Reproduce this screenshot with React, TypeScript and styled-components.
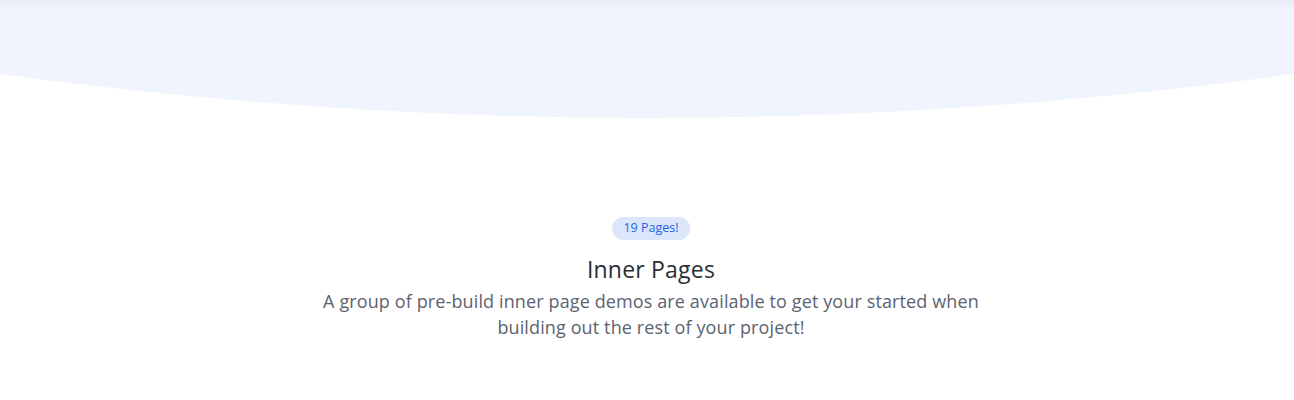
import React from "react";
import styled, { createGlobalStyle } from "styled-components";

const Global = createGlobalStyle`
  html, body { margin: 0; padding: 0; background: #ffffff; }
  body { font-family: "Open Sans", "Lato", sans-serif; }
`;

const Page = styled.div`
  width: 1294px;
  height: 400px;
  position: relative;
  overflow: hidden;
  background: #ffffff;
`;

const Wave = styled.svg`
  position: absolute;
  top: 0;
  left: 0;
  display: block;
`;

const Content = styled.section`
  position: relative;
  display: flex;
  flex-direction: column;
  align-items: center;
  padding: 217px 0 0 8px;
  text-align: center;
`;

const Badge = styled.span`
  display: inline-flex;
  align-items: center;
  justify-content: center;
  height: 23px;
  padding: 0 11px;
  border-radius: 12px;
  background: #dbe6fb;
  color: #1d64ea;
  font-size: 12.5px;
  line-height: 1;
`;

const Title = styled.h2`
  margin: 14px 0 0;
  font-size: 23px;
  font-weight: 400;
  letter-spacing: 0.2px;
  line-height: 30px;
  color: #2a2e35;
`;

const Lead = styled.p`
  margin: 4px 0 0;
  width: 690px;
  font-size: 18px;
  letter-spacing: 0.12px;
  line-height: 26px;
  color: #5c6370;
`;

export default function App() {
  return (
    <Page>
      <Global />
      <Wave width="1294" height="130" viewBox="0 0 1294 130">
        <defs>
          <linearGradient id="topShade" x1="0" y1="0" x2="0" y2="1">
            <stop offset="0" stopColor="#e6eaf3" />
            <stop offset="1" stopColor="#f0f4fd" />
          </linearGradient>
        </defs>
        <path d="M0 0 H1294 V74 Q647 162 0 74 Z" fill="#f0f4fd" />
        <rect x="0" y="0" width="1294" height="10" fill="url(#topShade)" opacity="0.7" />
      </Wave>
      <Content>
        <Badge>19 Pages!</Badge>
        <Title>Inner Pages</Title>
        <Lead>
          A group of pre-build inner page demos are available to get your started when building out the rest of your project!
        </Lead>
      </Content>
    </Page>
  );
}
